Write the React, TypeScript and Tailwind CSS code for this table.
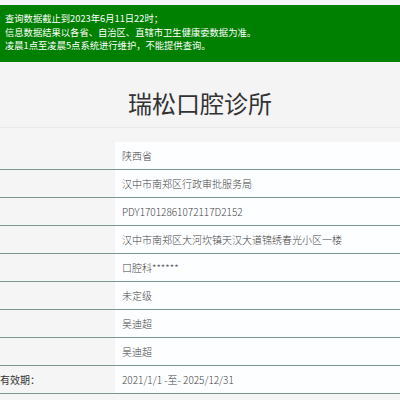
import React from "react";

const rows: { label: string; value: string }[] = [
  { label: "", value: "陕西省" },
  { label: "", value: "汉中市南郑区行政审批服务局" },
  { label: "", value: "PDY17012861072117D2152" },
  { label: "", value: "汉中市南郑区大河坎镇天汉大道锦绣春光小区一楼" },
  { label: "", value: "口腔科******" },
  { label: "", value: "未定级" },
  { label: "", value: "吴迪超" },
  { label: "", value: "吴迪超" },
  { label: "有效期：", value: "2021/1/1 -至- 2025/12/31" },
];

export default function App() {
  return (
    <div
      className="w-[400px] h-[400px] overflow-hidden bg-[#f5f5f5]"
      style={{ fontFamily: '"Noto Sans CJK SC", "Noto Sans", sans-serif' }}
    >
      <div className="h-[5px] bg-[#f6f4fa]" />
      <div className="h-[57px] bg-[#008000] pl-[5px] pt-[7px] text-white text-[9.3px] leading-[13.5px]">
        <div>查询数据截止到2023年6月11日22时；</div>
        <div>信息数据结果以各省、自治区、直辖市卫生健康委数据为准。</div>
        <div>凌晨1点至凌晨5点系统进行维护，不能提供查询。</div>
      </div>
      <div className="h-[66px] flex items-center justify-center border-b border-[#e9e9e9] bg-[#f4f4f4]">
        <span className="text-[24px] text-[#333] leading-none mt-[16px]">瑞松口腔诊所</span>
      </div>
      <div className="h-[14px]" />
      <div>
        {rows.map((r, i) => (
          <div key={i} className="flex h-[28px] border-b-[1.5px] border-[#7b968a]">
            <div className="w-[115px] flex items-center text-[10px] text-[#333]">{r.label}</div>
            <div className="flex-1 bg-[#fdfeff] flex items-center pl-[7px] text-[10px] font-light text-[#444]">
              {r.value}
            </div>
          </div>
        ))}
      </div>
    </div>
  );
}
